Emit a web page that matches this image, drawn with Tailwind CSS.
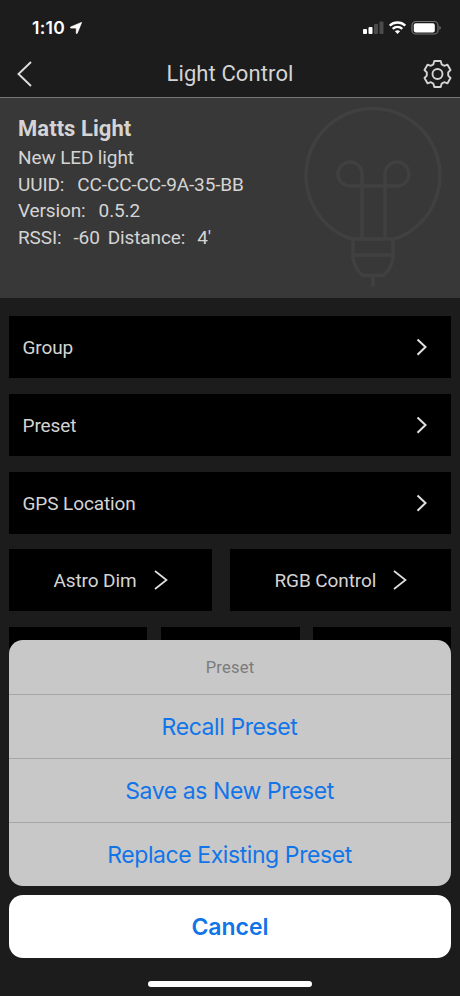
<!DOCTYPE html>
<html lang="en">
<head>
<meta charset="utf-8">
<title>Light Control</title>
<script src="https://cdn.jsdelivr.net/npm/@tailwindcss/browser@4"></script>
</head>
<body class="bg-[#1c1c1c]">
<div class="relative flex h-[996px] w-[460px] flex-col overflow-hidden bg-[#1c1c1c] font-[Roboto,sans-serif] text-[#d4d4d4]">

  <!-- Status bar -->
  <div class="flex h-[50px] shrink-0 items-center justify-between pt-[6px] pr-[19px] pl-[32px] text-white">
    <div class="flex items-center gap-[5px]">
      <span class="font-[Inter,sans-serif] text-[17.500px] leading-none font-semibold tracking-[0.300px]">1:10</span>
      <svg width="12" height="12" viewBox="0 0 12 12" fill="#fff"><path d="M11.600 .4 7.200 11.300c-.2.5-.9.400-.9-.1V6H.8c-.6 0-.7-.8-.1-1z" stroke="#fff" stroke-width=".8" stroke-linejoin="round"/></svg>
    </div>
    <svg width="79" height="16" viewBox="0 0 79 16">
      <rect x="1" y="9" width="4" height="5" rx="1" fill="#fff"/>
      <rect x="6.500" y="7" width="4" height="7" rx="1" fill="#fff"/>
      <rect x="12" y="4" width="4" height="10" rx="1" fill="#4b4b4b"/>
      <rect x="17.500" y="1.500" width="4" height="12.500" rx="1" fill="#4b4b4b"/>
      <g fill="none" stroke="#fff" stroke-width="2.300"><path d="M27.700 5.600a11.300 11.300 0 0 1 15.600 0"/><path d="M30.700 8.800a7 7 0 0 1 9.600 0"/></g>
      <path d="M35.500 14 32.900 11.300a3.900 3.900 0 0 1 5.200 0z" fill="#fff"/>
      <rect x="50" y="1.500" width="26" height="12.500" rx="3.800" fill="none" stroke="#727272" stroke-width="1.200"/>
      <rect x="51.800" y="3.200" width="21" height="9.200" rx="2" fill="#fff"/>
      <path d="M77.400 5.700c1.800.8 1.800 3.400 0 4.200z" fill="#727272"/>
    </svg>
  </div>

  <!-- Navigation bar -->
  <div class="flex h-[47px] shrink-0 items-center justify-between pr-[8px] pl-[17px]">
    <svg width="16" height="26" viewBox="0 0 16 26" fill="none" stroke="#dedede" stroke-width="1.900"><path d="M14 1 1.500 13 14 25"/></svg>
    <div class="ml-[5px] text-[22px] leading-none tracking-[0.100px]">Light Control</div>
    <svg width="30" height="30" viewBox="-15.500 -15 30 30" fill="none" stroke="#d4d4d4" stroke-width="1.900" stroke-linejoin="round"><circle r="5"/><path d="M-3.200 -13H3.200L4.200 -9.600L6.600 -8.200L10 -9.300L13 -4L10.700 -1.600V1.600L13 4L10 9.300L6.600 8.200L4.200 9.600L3.200 13H-3.200L-4.200 9.600L-6.600 8.200L-10 9.300L-13 4L-10.700 1.600V-1.600L-13 -4L-10 -9.300L-6.600 -8.200L-4.200 -9.600Z"/></svg>
  </div>

  <!-- Device summary -->
  <div class="flex h-[201px] shrink-0 justify-between border-t border-[#777777] bg-[#383838] pl-[18px] text-[19px] leading-[26.700px] tracking-[-0.120px]">
    <div class="pt-[16px]">
      <h1 class="mb-[1px] text-[22px] leading-[30px] font-bold tracking-[0.050px]">Matts Light</h1>
      <p>New LED light</p>
      <p class="flex gap-[13px]"><span>UUID:</span><span>CC-CC-CC-9A-35-BB</span></p>
      <p class="flex gap-[13px]"><span>Version:</span><span>0.5.2</span></p>
      <p class="flex"><span>RSSI:</span><span class="ml-[12px]">-60</span><span class="ml-[8px]">Distance:</span><span class="ml-[12px]">4'</span></p>
    </div>
    <svg class="mr-[14px]" width="144" height="200" viewBox="302 97.500 144 200" fill="none" stroke="#404040" stroke-width="3.500">
      <path d="M353 239a67 67 0 1 1 40 0"/>
      <path d="M362 239V174a12 12 0 1 0-12 11.500H396a12 12 0 1 0-11-11.500V239M352 238.500H394M353 239V258q2 11 10 17h20q8-6 10-17V239M353 254.500H393M373 276V286"/>
    </svg>
  </div>

  <!-- Setting rows -->
  <div class="flex flex-col gap-[16px] px-[9px] pt-[18px] text-[19px] leading-[28px] tracking-[-0.100px]">
    <div class="flex h-[62px] items-center justify-between bg-black pr-[23px] pl-[13.500px]"><span class="pt-[1px]">Group</span><svg width="12" height="18" viewBox="0 0 12 18" fill="none" stroke="#e0e0e0" stroke-width="2"><path d="M1.500 1.500 9.500 9 1.500 16.700"/></svg></div>
    <div class="flex h-[62px] items-center justify-between bg-black pr-[23px] pl-[13.500px]"><span class="pt-[1px]">Preset</span><svg width="12" height="18" viewBox="0 0 12 18" fill="none" stroke="#e0e0e0" stroke-width="2"><path d="M1.500 1.500 9.500 9 1.500 16.700"/></svg></div>
    <div class="flex h-[62px] items-center justify-between bg-black pr-[23px] pl-[13.500px]"><span class="pt-[1px]">GPS Location</span><svg width="12" height="18" viewBox="0 0 12 18" fill="none" stroke="#e0e0e0" stroke-width="2"><path d="M1.500 1.500 9.500 9 1.500 16.700"/></svg></div>
    <div class="-mt-px flex gap-[18px]">
      <div class="flex h-[62px] w-[203px] items-center gap-[17px] bg-black pl-[44.500px]"><span class="pt-[1px]">Astro Dim</span><svg width="14" height="20" viewBox="0 0 14 20" fill="none" stroke="#e0e0e0" stroke-width="1.700"><path d="M1 1 12.500 10 1 19"/></svg></div>
      <div class="flex h-[62px] w-[221px] items-center gap-[17px] bg-black pl-[44.500px]"><span class="pt-[1px]">RGB Control</span><svg width="14" height="20" viewBox="0 0 14 20" fill="none" stroke="#e0e0e0" stroke-width="1.700"><path d="M1 1 12.500 10 1 19"/></svg></div>
    </div>
    <div class="flex justify-between">
      <div class="h-[62px] w-[138px] bg-black"></div>
      <div class="h-[62px] w-[139px] bg-black"></div>
      <div class="h-[62px] w-[138px] bg-black"></div>
    </div>
  </div>

  <!-- Action sheet -->
  <div class="absolute inset-x-[9px] bottom-[9px] flex flex-col items-center font-[Inter,sans-serif] text-[23px] text-[#1175e8]">
    <div class="w-full overflow-hidden rounded-[14px] bg-[#c8c8c8] text-center tracking-[-0.420px]">
      <div class="flex h-[54px] items-center justify-center pt-[2px] font-[Roboto,sans-serif] text-[16.500px] tracking-[0.200px] text-[#7b7b7b]">Preset</div>
      <div class="flex h-[64px] items-center justify-center border-t border-[#a6a6a6] pt-[2px] pr-[1px]">Recall Preset</div>
      <div class="flex h-[64px] items-center justify-center border-t border-[#a6a6a6] pt-[2px] pr-[1px]">Save as New Preset</div>
      <div class="flex h-[64px] items-center justify-center border-t border-[#a6a6a6] pt-[2px] pr-[1px]">Replace Existing Preset</div>
    </div>
    <div class="mt-[9px] flex h-[63px] w-full items-center justify-center rounded-[14px] bg-white pt-[2px] font-semibold">Cancel</div>
    <div class="mt-[23px] h-[6px] w-[164px] rounded-full bg-white"></div>
  </div>
</div>
</body>
</html>
